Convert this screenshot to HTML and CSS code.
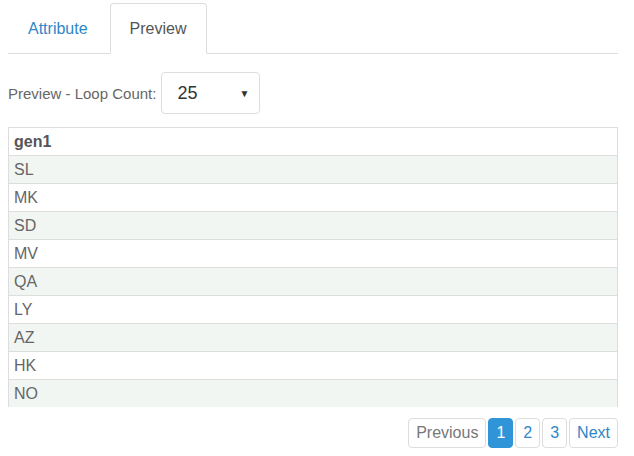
FILE: index.html
```html
<!DOCTYPE html>
<html>
<head>
<meta charset="utf-8">
<link rel="stylesheet" href="styles.css">
</head>
<body>
<div class="wrap">
  <ul class="tabs">
    <li class="tab"><a>Attribute</a></li>
    <li class="tab active"><a>Preview</a></li>
  </ul>
  <div class="loop">
    <label class="loop-label">Preview - Loop Count:</label>
    <div class="select"><span class="sel-val">25</span><span class="caret">▼</span></div>
  </div>
  <div class="table-box">
    <table class="grid">
      <thead><tr><th>gen1</th></tr></thead>
      <tbody>
        <tr><td>SL</td></tr>
        <tr><td>MK</td></tr>
        <tr><td>SD</td></tr>
        <tr><td>MV</td></tr>
        <tr><td>QA</td></tr>
        <tr><td>LY</td></tr>
        <tr><td>AZ</td></tr>
        <tr><td>HK</td></tr>
        <tr><td>NO</td></tr>
      </tbody>
    </table>
  </div>
  <div class="pager">
    <a class="pg disabled">Previous</a>
    <a class="pg current">1</a>
    <a class="pg">2</a>
    <a class="pg">3</a>
    <a class="pg">Next</a>
  </div>
</div>
</body>
</html>
```
FILE: styles.css
```css
html, body {
  margin: 0;
  padding: 0;
  background: #fff;
}
body {
  font-family: "Liberation Sans", Arial, sans-serif;
  font-size: 16px;
  color: #666;
}
.wrap {
  width: 610px;
  padding: 3px 16px 0 8px;
}
.tabs {
  list-style: none;
  margin: 0;
  padding: 0;
  display: flex;
  border-bottom: 1px solid #ddd;
}
.tab {
  margin-right: 2px;
  margin-bottom: -1px;
}
.tab a {
  display: block;
  padding: 0 19px;
  height: 49px;
  line-height: 49px;
  font-size: 16px;
  color: #2f86c8;
  border: 1px solid transparent;
  border-radius: 4px 4px 0 0;
}
.tab.active a {
  color: #555;
  background: #fff;
  border-color: #ddd #ddd #fff;
}
.loop {
  display: flex;
  align-items: center;
  margin-top: 18px;
}
.loop-label {
  font-size: 15px;
  color: #666;
  margin-right: 5px;
}
.select {
  height: 40px;
  border: 1px solid #ddd;
  border-radius: 4px;
  display: flex;
  align-items: center;
  justify-content: space-between;
  padding: 0 10px 0 15px;
  width: 72px;
}
.sel-val {
  font-size: 18px;
  color: #333;
}
.caret {
  font-size: 10px;
  color: #333;
}
.table-box {
  margin-top: 13px;
}
.grid {
  width: 100%;
  border-collapse: collapse;
  border: 1px solid #ddd;
  border-bottom: none;
}
.grid th, .grid td {
  height: 27px;
  padding: 0 5px;
  text-align: left;
  border-top: 1px solid #ddd;
  font-size: 16px;
  color: #666;
}
.grid th {
  font-weight: bold;
  color: #555;
}
.grid tbody tr:nth-child(odd) td {
  background: #f2f6f3;
}
.pager {
  display: flex;
  justify-content: flex-end;
  gap: 2px;
  margin-top: 11px;
}
.pg {
  display: block;
  height: 28px;
  line-height: 28px;
  padding: 0 7px;
  border: 1px solid #ddd;
  border-radius: 4px;
  font-size: 16px;
  color: #2f86c8;
  background: #fff;
}
.pg.disabled {
  color: #777;
}
.pg.current {
  background: #3094d9;
  border-color: #3094d9;
  color: #fff;
}
```
